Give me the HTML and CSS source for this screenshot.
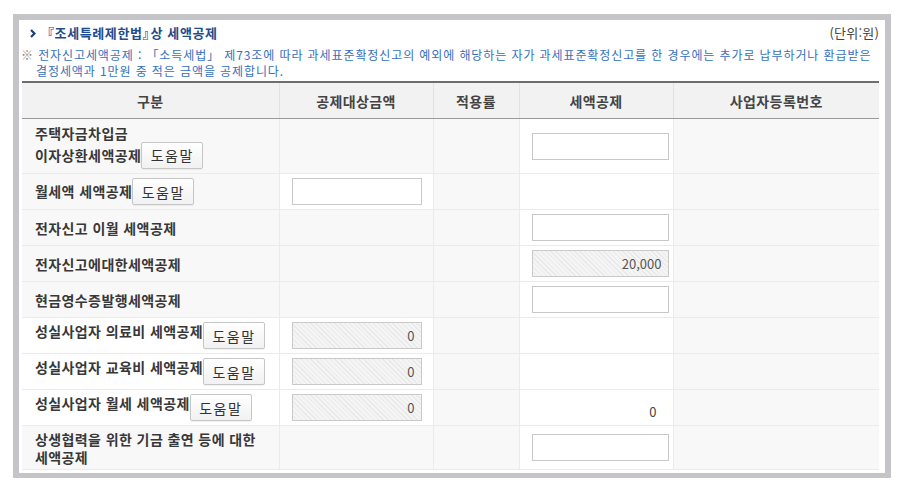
FILE: index.html
```html
<!DOCTYPE html>
<html lang="ko">

<head>
    <meta charset="UTF-8">
    <meta name="viewport" content="width=device-width, initial-scale=1.0">
    <title>조세특례제한법 세액공제</title>
    <link rel="stylesheet" href="styles.css">
</head>

<body>

    <div class="panel">
        <div class="title-bar">
            <h3 class="title">
                <svg class="chev" width="6" height="9" viewBox="0 0 6 9"><polyline points="1,1 4.5,4.5 1,8" fill="none" stroke="#1c3f73" stroke-width="2.2"/></svg>『조세특례제한법<span class="tight">』</span>상 세액공제
            </h3>
            <span class="unit">(단위:원)</span>
        </div>
        <p class="note"><span class="mark">※</span> 전자신고세액공제 : 「소득세법」 제73조에 따라 과세표준확정신고의 예외에 해당하는 자가 과세표준확정신고를 한 경우에는 추가로 납부하거나 환급받은<br>결정세액과 1만원 중 적은 금액을 공제합니다.</p>

        <table class="grid">
            <colgroup>
                <col style="width: 257px">
                <col style="width: 154px">
                <col style="width: 86px">
                <col style="width: 154px">
                <col style="width: 206px">
            </colgroup>
            <thead>
                <tr>
                    <th>구분</th>
                    <th>공제대상금액</th>
                    <th>적용률</th>
                    <th>세액공제</th>
                    <th>사업자등록번호</th>
                </tr>
            </thead>
            <tbody>
                <tr class="row-tall">
                    <td class="label">주택자금차입금<br>이자상환세액공제<button class="help-btn">도움말</button></td>
                    <td></td>
                    <td></td>
                    <td class="on"><input class="field wide" type="text"></td>
                    <td></td>
                </tr>
                <tr>
                    <td class="label">월세액 세액공제<button class="help-btn">도움말</button></td>
                    <td class="on"><input class="field" type="text"></td>
                    <td></td>
                    <td class="on"></td>
                    <td></td>
                </tr>
                <tr>
                    <td class="label">전자신고 이월 세액공제</td>
                    <td></td>
                    <td></td>
                    <td class="on"><input class="field wide" type="text"></td>
                    <td></td>
                </tr>
                <tr>
                    <td class="label">전자신고에대한세액공제</td>
                    <td></td>
                    <td></td>
                    <td class="on"><input class="field wide locked" type="text" value="20,000" readonly></td>
                    <td></td>
                </tr>
                <tr>
                    <td class="label">현금영수증발행세액공제</td>
                    <td></td>
                    <td></td>
                    <td class="on"><input class="field wide" type="text"></td>
                    <td></td>
                </tr>
                <tr>
                    <td class="label on">성실사업자 의료비 세액공제<button class="help-btn low">도움말</button></td>
                    <td class="on"><input class="field locked" type="text" value="0" readonly></td>
                    <td></td>
                    <td class="on"></td>
                    <td></td>
                </tr>
                <tr>
                    <td class="label on">성실사업자 교육비 세액공제<button class="help-btn low">도움말</button></td>
                    <td class="on"><input class="field locked" type="text" value="0" readonly></td>
                    <td></td>
                    <td class="on"></td>
                    <td></td>
                </tr>
                <tr>
                    <td class="label on">성실사업자 월세 세액공제<button class="help-btn low">도움말</button></td>
                    <td class="on"><input class="field locked" type="text" value="0" readonly></td>
                    <td></td>
                    <td class="on amount">0</td>
                    <td></td>
                </tr>
                <tr class="row-wrap">
                    <td class="label">상생협력을 위한 기금 출연 등에 대한<br>세액공제</td>
                    <td></td>
                    <td></td>
                    <td class="on"><input class="field wide" type="text"></td>
                    <td></td>
                </tr>
            </tbody>
        </table>
    </div>

</body>

</html>
```

FILE: styles.css
```css
body {
    margin: 0;
    background: #fff;
    font-family: "Noto Sans CJK KR", "Noto Sans", sans-serif;
    color: #333;
}

.panel {
    width: 857px;
    margin: 14px 0 0 13px;
    border: 6px solid #c5c5c9;
    border-bottom-width: 5px;
    padding: 4px 6px 3px 3px;
    background: #fff;
}

.title-bar {
    display: flex;
    justify-content: space-between;
    align-items: center;
    height: 18px;
}

.title {
    margin: 0 0 0 8px;
    font-size: 13px;
    line-height: 18px;
    letter-spacing: 0.6px;
    font-weight: bold;
    color: #1f4c8c;
    display: flex;
    align-items: center;
}

.title .tight {
    letter-spacing: -5px;
}

.chev {
    margin-right: 5px;
}

.unit {
    font-size: 13px;
    line-height: 18px;
    letter-spacing: 0.2px;
    color: #444;
}

.note {
    margin: 5px 0 2px -2px;
    padding-left: 16px;
    text-indent: -15px;
    font-size: 12px;
    line-height: 16px;
    letter-spacing: 0.9px;
    color: #3570bd;
    white-space: nowrap;
}

.note .mark {
    color: #888;
}

.grid {
    width: 857px;
    table-layout: fixed;
    border-collapse: collapse;
    border-top: 2px solid #6e6e6e;
    font-size: 14px;
    letter-spacing: 0.4px;
}

.grid th {
    height: 35px;
    padding: 0;
    background: #f2f2f2;
    border-left: 1px solid #e2e2e2;
    border-bottom: 1px solid #9a9a9a;
    font-weight: bold;
    color: #444;
}

.grid th:first-child,
.grid td:first-child {
    border-left: none;
}

.grid th:last-child,
.grid td:last-child {
    border-right: none;
}

.grid tbody tr {
    height: 36px;
}

.grid tbody tr.row-tall {
    height: 55px;
}

.grid tbody tr.row-wrap {
    height: 44px;
}

.grid td {
    padding: 0 5px 0 12px;
    border: 1px solid #ebebeb;
    background: #f8f8f8;
    line-height: 18px;
    vertical-align: middle;
}

.grid td.on {
    background: #fff;
}

.grid td.label {
    padding-left: 13px;
    font-weight: bold;
    color: #383838;
}

.grid td.amount {
    text-align: right;
    padding: 8px 16px 0 0;
    font-size: 13px;
    color: #444;
    letter-spacing: 0;
}

.help-btn {
    width: 62px;
    height: 27px;
    margin-left: 0;
    padding: 0;
    border: 1px solid #c6c6c6;
    border-radius: 2px;
    background: linear-gradient(#ffffff, #f1f1f1);
    box-shadow: 0 1px 1px rgba(0, 0, 0, 0.06);
    font-family: "Noto Sans CJK KR", sans-serif;
    font-size: 14px;
    letter-spacing: 1.5px;
    color: #333;
    vertical-align: -1px;
}

.help-btn.low {
    vertical-align: -5px;
}

.field {
    display: block;
    box-sizing: border-box;
    width: 130px;
    height: 27px;
    margin: 0;
    padding: 0 6px;
    border: 1px solid #c9c9c9;
    background: #fff;
    font-family: "Noto Sans CJK KR", "Noto Sans", sans-serif;
    font-size: 13px;
    color: #555;
    text-align: right;
}

.field.wide {
    width: 137px;
}

.field.locked {
    background: repeating-linear-gradient(45deg, #f4f4f4 0 2.4px, #e9e9e9 2.4px 3.4px);
}
```
